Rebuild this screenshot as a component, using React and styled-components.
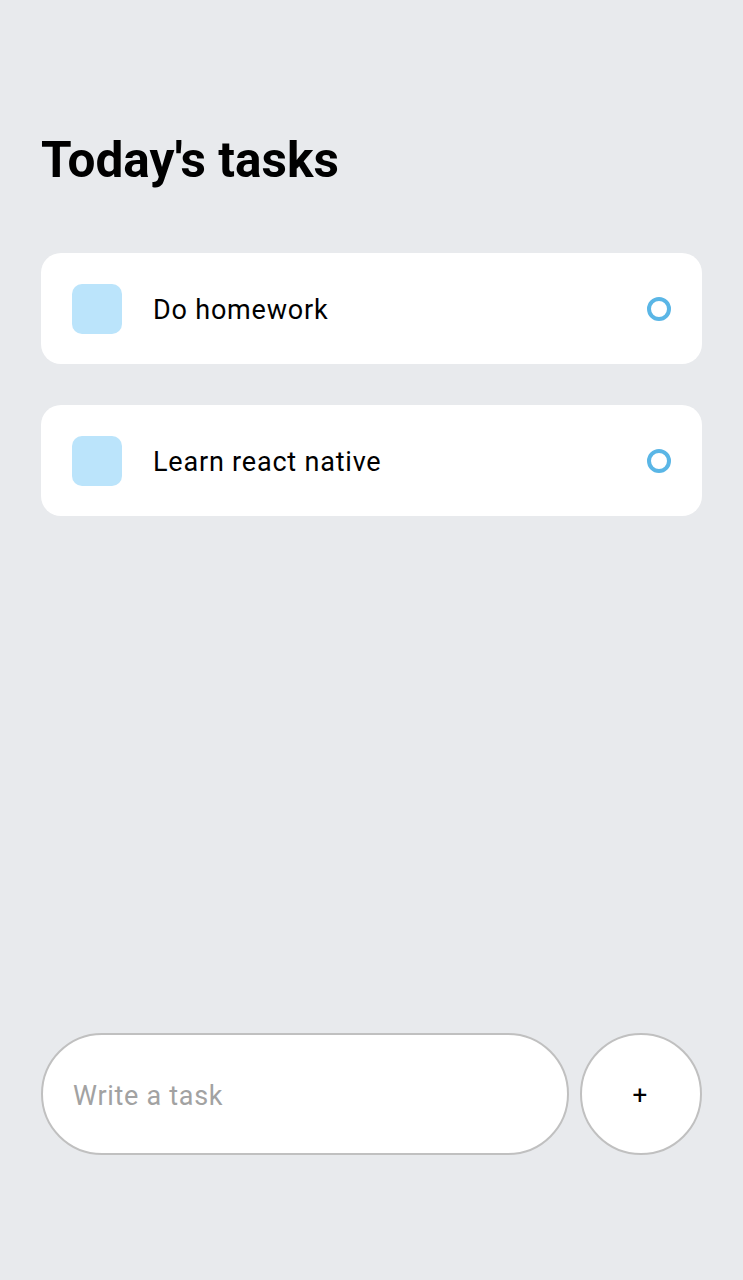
import React from "react";
import styled, { createGlobalStyle } from "styled-components";

const Global = createGlobalStyle`
  html, body { margin: 0; padding: 0; background: #E8EAED; }
  body { font-family: Roboto, "Noto Sans", sans-serif; }
`;

const Screen = styled.div`
  min-height: 1280px;
  box-sizing: border-box;
  display: flex;
  flex-direction: column;
  padding: 130px 41px 125px 41px;
`;

const Title = styled.h1`
  margin: 0;
  font-size: 49.5px;
  font-weight: 700;
  color: #000;
  line-height: 60px;
  letter-spacing: 0;
`;

const List = styled.div`
  margin-top: 63px;
  display: flex;
  flex-direction: column;
  gap: 41px;
`;

const Card = styled.div`
  background: #fff;
  border-radius: 20px;
  height: 111px;
  padding: 0 31px;
  box-sizing: border-box;
  display: flex;
  align-items: center;
  justify-content: space-between;
`;

const Left = styled.div`
  display: flex;
  align-items: center;
`;

const Square = styled.div`
  width: 50px;
  height: 50px;
  border-radius: 10px;
  background: #bbe4fb;
  margin-right: 31px;
`;

const TaskText = styled.span`
  font-size: 27px;
  letter-spacing: 0.8px;
  color: #000;
  padding-top: 3px;
`;

const Circle = styled.div`
  width: 24px;
  height: 24px;
  box-sizing: border-box;
  border: 4px solid #5ab6e6;
  border-radius: 50%;
`;

const Footer = styled.div`
  margin-top: auto;
  display: flex;
  align-items: center;
  justify-content: space-between;
`;

const Input = styled.input`
  width: 528px;
  height: 122px;
  box-sizing: border-box;
  border-radius: 61px;
  border: 2px solid #c0c0c0;
  background: #fff;
  padding: 4px 30px 0;
  font-family: Roboto, sans-serif;
  font-size: 27px;
  letter-spacing: 0.7px;
  outline: none;
  &::placeholder { color: #a2a2a2; }
`;

const AddButton = styled.button`
  width: 122px;
  height: 122px;
  border-radius: 50%;
  border: 2px solid #c0c0c0;
  background: #fff;
  font-family: Roboto, sans-serif;
  font-size: 26px;
  color: #000;
  padding: 2px 2px 0 0;
  cursor: pointer;
`;

const tasks = ["Do homework", "Learn react native"];

export default function App() {
  return (
    <>
      <Global />
      <Screen>
        <Title>Today's tasks</Title>
        <List>
          {tasks.map((t) => (
            <Card key={t}>
              <Left>
                <Square />
                <TaskText>{t}</TaskText>
              </Left>
              <Circle />
            </Card>
          ))}
        </List>
        <Footer>
          <Input placeholder="Write a task" />
          <AddButton>+</AddButton>
        </Footer>
      </Screen>
    </>
  );
}
